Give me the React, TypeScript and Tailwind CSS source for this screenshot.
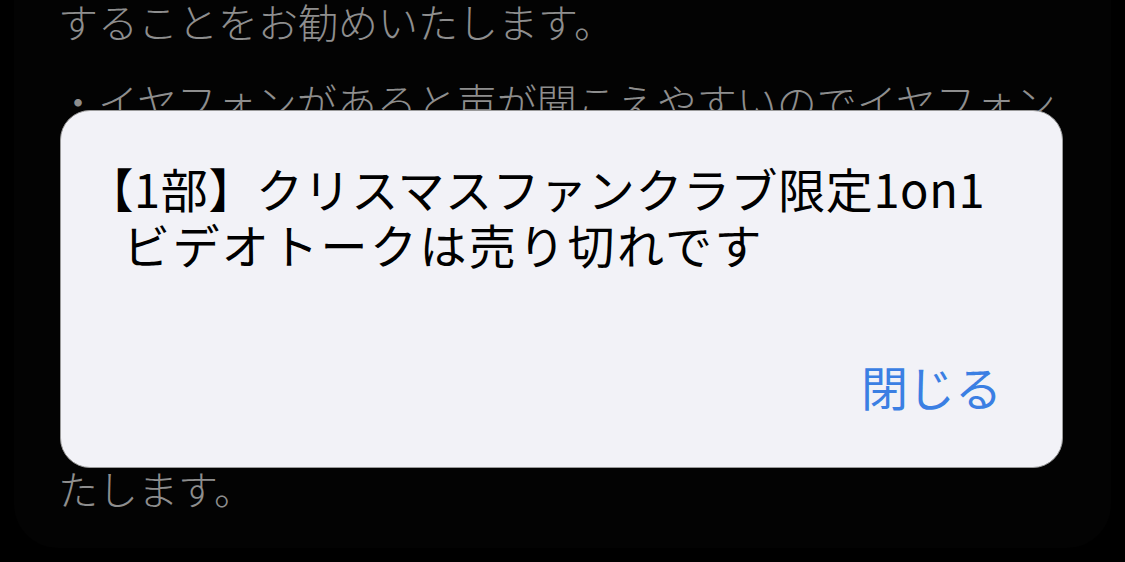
export default function App() {
  const font = { fontFamily: '"Noto Sans CJK JP", "Noto Sans", sans-serif' };
  return (
    <div className="relative w-[1125px] h-[562px] overflow-hidden bg-black" style={font}>
      <div className="px-[14px] pb-[14px] h-full">
        <div className="h-full rounded-b-[44px] bg-[#030303] overflow-hidden">
          <div className="pl-[44px] text-[40px] leading-[60px] text-[#8e8e8e] font-light whitespace-nowrap">
            <div className="mt-[-9px]">することをお勧めいたします。</div>
            <div className="mt-[20px]">・イヤフォンがあると声が聞こえやすいのでイヤフォン</div>
            <div>のご使用をお勧めいたします。</div>
            <div className="mt-[20px]">・通話中の録画や録音はご遠慮ください。</div>
            <div>・通信環境の良い場所でのご参加をお願い</div>
            <div>いたします。</div>
            <div>・時間になりましたら自動で終了いたしますの</div>
            <div className="mt-[7px]">たします。</div>
          </div>
        </div>
      </div>

      <div className="absolute left-[60px] top-[110px] w-[1003px] h-[358px] rounded-[30px] bg-[#f2f2f7] border border-[#9a9a9a] flex flex-col">
        <div className="pt-[49px] pl-[62px] text-[47px] leading-[56px] text-black whitespace-nowrap">
          <div className="ml-[-13px] tracking-[0.6px]"><span className="[font-feature-settings:'halt']">【</span>1部】クリスマスファンクラブ限定1on1</div>
          <div className="tracking-[2.4px]">ビデオトークは売り切れです</div>
        </div>
        <div className="mt-[86px] pr-[60px] flex justify-end">
          <span className="text-[47px] leading-[56px] text-[#3b7fe3]">閉じる</span>
        </div>
      </div>
    </div>
  );
}
